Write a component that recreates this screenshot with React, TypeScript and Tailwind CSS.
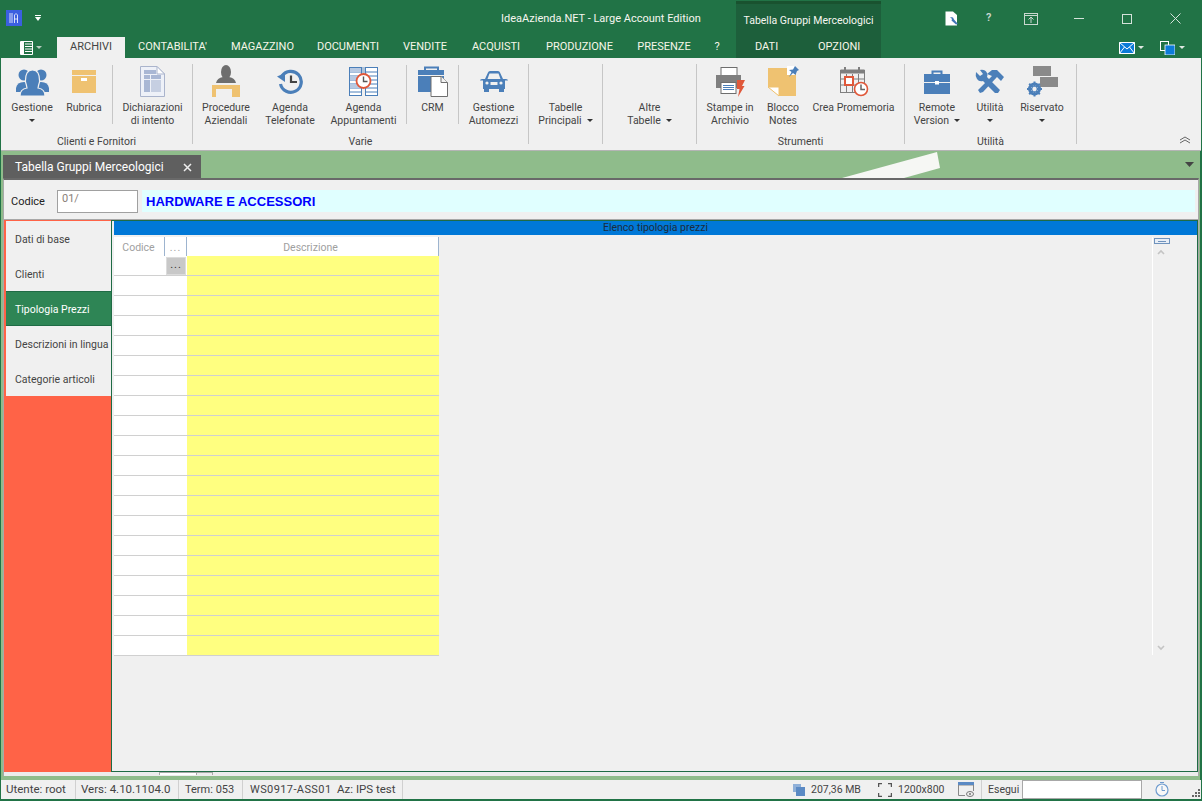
import React from "react";

const BLUE = "#4b7fb9";
const TAN = "#efc271";
const GRAY = "#7f7f7f";
const RED = "#e0583a";

function Arrow({ color = "#333" }: { color?: string }) {
  return (
    <svg width="6" height="3" viewBox="0 0 6 3" className="inline-block shrink-0">
      <path d="M0 0H6L3 3Z" fill={color} />
    </svg>
  );
}

const PeopleIcon = () => (
  <svg width="33" height="28" viewBox="0 0 33 28">
    <circle cx="8" cy="7" r="5.5" fill={BLUE} />
    <circle cx="25" cy="7" r="5.5" fill={BLUE} />
    <path d="M0 20Q1 14 8 14T16 20L16 24H0Z" fill={BLUE} />
    <path d="M33 20Q32 14 25 14T17 20L17 24H33Z" fill={BLUE} />
    <path d="M4 28Q4 21 11 20Q10.500 17 9.500 14Q9 2 16.500 2Q24 2 23.500 14Q22.500 17 22 20Q29 21 29 28Z" fill={BLUE} stroke="#f0f0f0" strokeWidth="1.2" />
  </svg>
);

const BoxIcon = () => (
  <svg width="24" height="23" viewBox="0 0 24 23">
    <rect x="0" y="0" width="24" height="5" fill={TAN} />
    <rect x="0" y="6" width="24" height="17" fill={TAN} />
    <rect x="9" y="8" width="6" height="3" fill="#fff" />
  </svg>
);

const DocIcon = () => (
  <svg width="25" height="31" viewBox="0 0 25 31">
    <path d="M0.500 0.500H17L24.500 8V30.500H0.500Z" fill="#eef1f8" stroke="#aab4cc" />
    <path d="M17 0.500V8H24.500Z" fill="#fff" stroke="#aab4cc" />
    <rect x="4" y="4" width="12" height="4" fill="#a9b7d4" />
    <rect x="4" y="9" width="6" height="4" fill="#a9b7d4" />
    <rect x="11" y="9" width="10" height="4" fill="#a9b7d4" />
    <rect x="4" y="14" width="6" height="12" fill="#a9b7d4" />
    <rect x="11" y="14" width="10" height="12" fill="#c6cfe2" />
  </svg>
);

const DeskIcon = () => (
  <svg width="28" height="33" viewBox="0 0 28 33">
    <ellipse cx="14" cy="7" rx="5" ry="7" fill="#6e6e6e" />
    <path d="M4 18Q5 13 11 12H17Q23 13 24 18Z" fill="#6e6e6e" />
    <path d="M0 20H28V32H20V24H4V32H0Z" fill={TAN} />
  </svg>
);

const HistoryIcon = () => (
  <svg width="26" height="25" viewBox="0 0 26 25">
    <path d="M5 7A10.500 10.500 0 1 1 3.500 15" fill="none" stroke={BLUE} strokeWidth="3.200" />
    <path d="M0 7.500L8 4L8 13Z" fill={BLUE} />
    <path d="M14 6.500V13H20" fill="none" stroke="#444" strokeWidth="2.200" />
  </svg>
);

const ScheduleIcon = () => (
  <svg width="29" height="30" viewBox="0 0 29 30">
    <rect x="0.500" y="0.500" width="12" height="28" fill="#fff" stroke={BLUE} />
    <rect x="16.500" y="0.500" width="12" height="28" fill="#fff" stroke={BLUE} />
    <path d="M1 5H12M1 9H12M1 13H12M1 17H12M1 21H12M1 25H12M17 5H28M17 9H28M17 13H28M17 17H28M17 21H28M17 25H28" stroke={BLUE} />
    <rect x="1" y="1" width="11" height="4" fill="#b7c9e2" />
    <rect x="1" y="9" width="11" height="4" fill="#b7c9e2" />
    <rect x="1" y="17" width="11" height="4" fill="#b7c9e2" />
    <rect x="12" y="0" width="5" height="6" fill="#4b7fb9" opacity="0.400" />
    <circle cx="14.500" cy="14" r="7" fill="#fff" stroke={RED} strokeWidth="1.800" />
    <path d="M14.500 9.500V14.500H18.500" fill="none" stroke="#555" strokeWidth="1.400" />
  </svg>
);

const CrmIcon = () => (
  <svg width="30" height="31" viewBox="0 0 30 31">
    <path d="M7 4V1.500H20V5" fill="none" stroke={BLUE} strokeWidth="2" />
    <rect x="0" y="4" width="26" height="5" fill={BLUE} />
    <rect x="0" y="10" width="26" height="16" fill={BLUE} />
    <path d="M13 10.500H23L29.500 16.500V30.500H13Z" fill="#fff" stroke="#6f6f6f" />
    <path d="M23 10.500V16.500H29.500" fill="#f2f2f2" stroke="#6f6f6f" />
  </svg>
);

const CarIcon = () => (
  <svg width="28" height="21" viewBox="0 0 28 21">
    <path d="M5 8L8 1.500Q8.500 0 10 0H18Q19.500 0 20 1.500L23 8H26Q28 8 28 9.500H25V18H3V9.500H0Q0 8 2 8Z" fill={BLUE} />
    <path d="M7.500 8L9.500 2.500H18.500L20.500 8Z" fill="#f0f0f0" />
    <rect x="4" y="17" width="5" height="4" fill={BLUE} />
    <rect x="19" y="17" width="5" height="4" fill={BLUE} />
    <circle cx="7" cy="12" r="1.600" fill="#f0f0f0" />
    <circle cx="21" cy="12" r="1.600" fill="#f0f0f0" />
    <rect x="10.500" y="11" width="7" height="3" fill="#f0f0f0" />
  </svg>
);

const PrinterIcon = () => (
  <svg width="29" height="30" viewBox="0 0 29 30">
    <rect x="5" y="0.500" width="16" height="9" fill="#fff" stroke="#6e6e6e" />
    <rect x="0" y="8" width="25" height="13" fill="#7f7f7f" />
    <rect x="5" y="15.500" width="15" height="11" fill="#fff" stroke="#6e6e6e" />
    <path d="M7 18.500H18M7 20.500H18M7 22.500H18" stroke={BLUE} />
    <path d="M21 13H29L26 19H28.500L22 30L23.500 22H21Z" fill={RED} />
  </svg>
);

const NoteIcon = () => (
  <svg width="31" height="31" viewBox="0 0 31 31">
    <path d="M0 2H28V30H11L0 21Z" fill={TAN} />
    <path d="M0 21H11V30Z" fill="#fff" stroke={TAN} />
    <rect x="19" y="0" width="8" height="9" fill="#fff" />
    <path d="M27 0L31 4L29 5L27.500 9L25 7L21 11L23.500 6L21 4L25 3.500Z" fill={BLUE} />
  </svg>
);

const CalendarIcon = () => (
  <svg width="30" height="31" viewBox="0 0 30 31">
    <rect x="1.500" y="4.500" width="24" height="22" fill="#f0f0f0" stroke={GRAY} />
    <rect x="1.500" y="3.500" width="24" height="4" fill={GRAY} />
    <rect x="5" y="1" width="2" height="5" fill={GRAY} />
    <rect x="19" y="1" width="2" height="5" fill={GRAY} />
    <path d="M7.500 8V26M13.500 8V26M19.500 8V26M2 13H25M2 19H25" stroke={GRAY} />
    <rect x="6" y="11" width="8" height="8" fill="#fff" stroke={RED} strokeWidth="2" />
    <circle cx="22" cy="23" r="6.500" fill="#fff" stroke={RED} strokeWidth="1.600" />
    <path d="M22 18.500V23.500H26" fill="none" stroke="#666" strokeWidth="1.500" />
  </svg>
);

const CaseIcon = () => (
  <svg width="26" height="24" viewBox="0 0 26 24">
    <path d="M8.500 5V1.500H17.500V5" fill="none" stroke={BLUE} strokeWidth="2" />
    <rect x="0" y="4" width="26" height="8" fill={BLUE} />
    <rect x="0" y="13" width="26" height="11" fill={BLUE} />
    <rect x="11" y="11" width="4" height="3.500" fill="#fff" />
  </svg>
);

const ToolsIcon = () => (
  <svg width="30" height="25" viewBox="0 0 30 25">
    <path d="M1 3L5 7L8 5L5 1Q10 0 12 4Q13 6 12 8L25 21L23 24L20 24L8 12Q4 13 2 10Q0 7 1 3Z" fill={BLUE} />
    <path d="M12 5L17 1H22L29 8L26 12L22 8L8 23L5 24L3 21L17 7Z" fill={BLUE} />
  </svg>
);

const ReservedIcon = () => (
  <svg width="33" height="31" viewBox="0 0 33 31">
    <rect x="7" y="0" width="18" height="10" fill="#8a8a8a" />
    <rect x="14" y="11" width="18" height="10" fill="#8a8a8a" />
    <circle cx="8.500" cy="23" r="5" fill="none" stroke={BLUE} strokeWidth="3" />
    <path d="M8.500 15.500V30.500M1 23H16M3.200 17.700L13.800 28.300M13.800 17.700L3.200 28.300" stroke={BLUE} strokeWidth="2" />
    <circle cx="8.500" cy="23" r="2.200" fill="#f0f0f0" />
  </svg>
);

type ItemProps = {
  w: string;
  icon?: React.ReactNode;
  lines: string[];
  arrow?: "below" | "inline";
};

function Item({ w, icon, lines, arrow }: ItemProps) {
  return (
    <div className={`flex flex-col items-center pt-[5px] ${w}`}>
      <div className="flex h-[37px] w-full items-center justify-center">{icon}</div>
      <div className="mt-px flex flex-col items-center whitespace-nowrap text-[10.5px] leading-[13px] text-[#444]">
        {lines.map((l, i) => (
          <div key={i} className="flex items-center gap-[5px]">
            {l}
            {arrow === "inline" && i === lines.length - 1 && <Arrow />}
          </div>
        ))}
        {arrow === "below" && (
          <div className="flex h-[13px] items-center">
            <Arrow />
          </div>
        )}
      </div>
    </div>
  );
}

const ShortSep = () => <div className="mt-[7px] h-[59px] w-px shrink-0 bg-[#c6c6c6]" />;
const GroupSep = () => <div className="mt-[6px] h-[80px] w-px shrink-0 bg-[#c6c6c6]" />;

function Group({ label, w, children }: { label?: string; w: string; children: React.ReactNode }) {
  return (
    <div className={`relative flex h-[92px] shrink-0 flex-col ${w}`}>
      <div className="flex h-[76px]">{children}</div>
      <div className="h-[16px] pt-px text-center text-[10.5px] leading-[14px] text-[#444]">{label}</div>
    </div>
  );
}

function Tab({ label, w, active }: { label: string; w: string; active?: boolean }) {
  return (
    <div
      className={`flex h-[21px] shrink-0 items-center justify-center whitespace-nowrap text-[11px] ${w} ${
        active ? "bg-[#f0f0f0] text-[#444]" : "text-[#f6f6e8]"
      }`}
    >
      {label}
    </div>
  );
}

const rows = Array.from({ length: 20 }, (_, i) => i);

export default function App() {
  return (
    <div
      className="flex h-[801px] w-[1202px] flex-col overflow-hidden bg-[#217346]"
      style={{ fontFamily: 'Roboto, "Noto Sans", sans-serif' }}
    >
      {/* Title bar */}
      <div className="flex h-[58px] shrink-0">
        <div className="flex w-[736px] shrink-0 flex-col">
          <div className="flex h-[37px] items-center">
            <div className="ml-[6px] mt-[-1px] flex h-[16px] w-[16px] items-center justify-center bg-[#3b5fe0]">
              <svg width="10" height="12" viewBox="0 0 10 12">
                <path d="M1 1V11M3 1V11M5.500 11V3Q7 0 8.500 3V11M5.500 7H8.500" fill="none" stroke="#fff" strokeWidth="0.800" />
              </svg>
            </div>
            <svg width="6" height="6" viewBox="0 0 6 6" className="ml-[13px] mt-[-1px]">
              <path d="M0 0H6V1H0ZM0 2H6L3 6Z" fill="#fff" />
            </svg>
            <div className="ml-[460px] mt-[1px] whitespace-nowrap text-[11px] text-[#f6f6f0]">
              IdeaAzienda.NET - Large Account Edition
            </div>
          </div>
          <div className="flex h-[21px] items-center">
            <div className="ml-[20px] flex w-[37px] shrink-0 items-center gap-[3px]">
              <svg width="13" height="14" viewBox="0 0 13 14">
                <path d="M0.500 0.500H12.500V13.500H0.500Z" fill="#217346" stroke="#fff" />
                <rect x="1" y="1" width="3" height="12" fill="#fff" />
                <path d="M5 3H12M5 5.500H12M5 8H12M5 10.500H12" stroke="#fff" />
              </svg>
              <Arrow color="#b8ccbf" />
            </div>
            <Tab label="ARCHIVI" w="w-[68px]" active />
            <Tab label="CONTABILITA'" w="w-[95px]" />
            <Tab label="MAGAZZINO" w="w-[85px]" />
            <Tab label="DOCUMENTI" w="w-[86px]" />
            <Tab label="VENDITE" w="w-[68px]" />
            <Tab label="ACQUISTI" w="w-[74px]" />
            <Tab label="PRODUZIONE" w="w-[93px]" />
            <Tab label="PRESENZE" w="w-[76px]" />
            <Tab label="?" w="w-[30px]" />
          </div>
        </div>
        <div className="mt-[1px] flex w-[145px] shrink-0 flex-col border-t-[3px] border-[#19522f] bg-[#1d5f3b]">
          <div className="flex h-[33px] items-center justify-center whitespace-nowrap text-[10.5px] text-[#f6f6f0]">
            Tabella Gruppi Merceologici
          </div>
          <div className="flex h-[21px] items-center text-[11px] text-[#f6f6e8]">
            <div className="w-[82px] pl-[19px]">DATI</div>
            <div>OPZIONI</div>
          </div>
        </div>
        <div className="relative flex-1">
          <div className="flex h-[37px] items-center">
            <svg width="14" height="15" viewBox="0 0 14 15" className="ml-[64px] mt-[-1px]">
              <path d="M0.500 0.500H8L12 4V14.500H0.500Z" fill="#fff" />
              <path d="M5 6L7 8L6.500 9.500L11 13.500L13 13L9 8.500L8 6.500Z" fill="#3f74b5" />
            </svg>
            <div className="ml-[27px] mt-[-1px] w-[10px] text-[11px] font-semibold text-[#c9d8cf]">?</div>
            <svg width="14" height="12" viewBox="0 0 14 12" className="ml-[28px]">
              <rect x="0.500" y="0.500" width="13" height="11" fill="none" stroke="#c9d8cf" />
              <path d="M1 2.500H13M7 10V4.500M4.500 6.500L7 4L9.500 6.500" fill="none" stroke="#c9d8cf" />
            </svg>
            <div className="ml-[36px] h-px w-[10px] bg-[#d5e2da]" />
            <div className="ml-[38px] h-[10px] w-[10px] border border-[#d5e2da]" />
            <svg width="11" height="11" viewBox="0 0 11 11" className="ml-[38px]">
              <path d="M0.500 0.500L10.500 10.500M10.500 0.500L0.500 10.500" stroke="#d5e2da" />
            </svg>
          </div>
          <div className="flex h-[21px] items-center">
            <svg width="16" height="12" viewBox="0 0 16 12" className="ml-[238px]">
              <rect width="16" height="12" fill="#0c7bd8" />
              <path d="M0.500 0.500H15.500V11.500H0.500ZM0.500 0.500L8 7L15.500 0.500M0.500 11.500L5.500 5M15.500 11.500L10.500 5" fill="none" stroke="#fff" />
            </svg>
            <div className="ml-[3px] flex">
              <Arrow color="#dfe8e2" />
            </div>
            <svg width="15" height="14" viewBox="0 0 15 14" className="ml-[16px]">
              <rect x="0.500" y="0.500" width="8" height="9" fill="none" stroke="#fff" />
              <rect x="5" y="4" width="10" height="10" fill="#0c7bd8" stroke="#fff" strokeWidth="0.800" />
            </svg>
            <div className="ml-[4px] flex">
              <Arrow color="#dfe8e2" />
            </div>
          </div>
        </div>
      </div>

      {/* Ribbon */}
      <div className="mx-px flex h-[93px] shrink-0 border-b border-[#b4b4b4] bg-[#f0f0f0]">
        <Group label="Clienti e Fornitori" w="w-[191px]">
          <div className="w-[3px]" />
          <Item w="w-[56px]" icon={<PeopleIcon />} lines={["Gestione"]} arrow="below" />
          <Item w="w-[48px]" icon={<BoxIcon />} lines={["Rubrica"]} />
          <div className="w-[4px]" />
          <ShortSep />
          <Item w="w-[79px]" icon={<DocIcon />} lines={["Dichiarazioni", "di intento"]} />
        </Group>
        <GroupSep />
        <Group label="Varie" w="w-[335px]">
          <Item w="w-[66px]" icon={<DeskIcon />} lines={["Procedure", "Aziendali"]} />
          <Item w="w-[62px]" icon={<HistoryIcon />} lines={["Agenda", "Telefonate"]} />
          <Item w="w-[85px]" icon={<ScheduleIcon />} lines={["Agenda", "Appuntamenti"]} />
          <ShortSep />
          <Item w="w-[51px]" icon={<CrmIcon />} lines={["CRM"]} />
          <ShortSep />
          <Item w="w-[69px]" icon={<CarIcon />} lines={["Gestione", "Automezzi"]} />
        </Group>
        <GroupSep />
        <Group w="w-[73px]">
          <Item w="w-[73px]" lines={["Tabelle", "Principali"]} arrow="inline" />
        </Group>
        <GroupSep />
        <Group w="w-[93px]">
          <Item w="w-[93px]" lines={["Altre", "Tabelle"]} arrow="inline" />
        </Group>
        <GroupSep />
        <Group label="Strumenti" w="w-[207px]">
          <Item w="w-[66px]" icon={<PrinterIcon />} lines={["Stampe in", "Archivio"]} />
          <Item w="w-[40px]" icon={<NoteIcon />} lines={["Blocco", "Notes"]} />
          <Item w="w-[101px]" icon={<CalendarIcon />} lines={["Crea Promemoria"]} />
        </Group>
        <GroupSep />
        <Group label="Utilità" w="w-[171px]">
          <Item w="w-[64px]" icon={<CaseIcon />} lines={["Remote", "Version"]} arrow="inline" />
          <Item w="w-[42px]" icon={<ToolsIcon />} lines={["Utilità"]} arrow="below" />
          <Item w="w-[62px]" icon={<ReservedIcon />} lines={["Riservato"]} arrow="below" />
        </Group>
        <GroupSep />
        <div className="flex flex-1 items-end justify-end pb-[6px] pr-[10px]">
          <svg width="12" height="8" viewBox="0 0 12 8">
            <path d="M1 4L6 1L11 4M1 7L6 4L11 7" fill="none" stroke="#666" />
          </svg>
        </div>
      </div>

      {/* Workspace */}
      <div className="ml-px mr-[2px] flex flex-1 flex-col bg-[#8fbc8b] pl-[2px] pr-px">
        <div className="relative h-[27px] shrink-0 pt-[4px]">
          <div className="flex h-[23px] w-[198px] items-center justify-between bg-[#5f5f5f] pl-[12px] pr-[9px] pt-[1px] text-[12px] text-white">
            <span className="whitespace-nowrap">Tabella Gruppi Merceologici</span>
            <svg width="9" height="9" viewBox="0 0 9 9">
              <path d="M1 1L8 8M8 1L1 8" stroke="#eee" strokeWidth="1.500" />
            </svg>
          </div>
          <svg width="100" height="27" viewBox="0 0 100 27" className="absolute left-[839px] top-0">
            <path d="M0 27L95 1L98 17L62 27Z" fill="#f6f7f4" />
          </svg>
          <svg width="9" height="5" viewBox="0 0 9 5" className="absolute right-[5px] top-[11px]">
            <path d="M0 0H9L4.500 5Z" fill="#444" />
          </svg>
        </div>

        <div className="flex h-[598px] shrink-0 flex-col border-x border-t-2 border-x-[#a8a8a8] border-t-[#696969] bg-[#f0f0f0]">
          {/* Form header */}
          <div className="flex h-[40px] shrink-0 items-start border-b border-[#a8a8a8] pt-[10px]">
            <div className="ml-[7px] mt-[4px] w-[46px] text-[11px] leading-[16px] text-[#222]">Codice</div>
            <div className="h-[23px] w-[81px] border border-[#a0a0a0] bg-white pl-[4px] text-[11px] leading-[16px] text-[#8a7f78]">
              01/
            </div>
            <div
              className="ml-[4px] mr-[3px] h-[22px] flex-1 bg-[#e0ffff] pl-[4px] pt-px text-[13px] font-bold leading-[22px] text-[#0000ff]"
              style={{ fontFamily: '"Liberation Sans", Arial, sans-serif' }}
            >
              HARDWARE E ACCESSORI
            </div>
          </div>

          {/* Body */}
          <div className="flex h-[552px] shrink-0">
            <div className="flex w-[108px] shrink-0 flex-col border-r border-[#1f6b45] bg-[#ff6347] pl-[2px] pt-px">
              <div className="bg-[#f0f0f0] text-[10.5px] text-[#444]">
                <div className="flex h-[35px] items-center pl-[9px] pt-[3px]">Dati di base</div>
                <div className="flex h-[35px] items-center pl-[9px] pt-[3px]">Clienti</div>
                <div className="flex h-[35px] items-center border-y border-[#1f6b45] bg-[#2e8555] pl-[9px] pt-[3px] text-white">
                  Tipologia Prezzi
                </div>
                <div className="flex h-[35px] items-center whitespace-nowrap pl-[9px] pt-[3px]">Descrizioni in lingua</div>
                <div className="flex h-[35px] items-center pl-[9px] pt-[3px]">Categorie articoli</div>
              </div>
            </div>
            <div className="flex min-w-0 flex-1 flex-col border-y border-r border-[#1f6b45] bg-[#f0f0f0] pl-[2px]">
              <div className="flex h-[14px] shrink-0 items-center justify-center bg-[#0078d7] text-[10.5px] text-[#1c2c3c]">
                Elenco tipologia prezzi
              </div>
              <div className="mt-[2px] flex">
                <div className="w-[325px] shrink-0">
                  <div className="flex h-[19px] bg-white text-[10.5px] leading-[21px] text-[#a0a0a0]">
                    <div className="w-[51px] border-r border-[#9db4cf] pr-px text-center">Codice</div>
                    <div className="w-[22px] border-r border-[#9db4cf] text-center tracking-[1px]">...</div>
                    <div className="flex-1 border-r border-[#9db4cf] pr-[4px] text-center">Descrizione</div>
                  </div>
                  {rows.map((r) => (
                    <div key={r} className="flex h-[20px] border-b border-[#d0d0d0] bg-white">
                      <div className="w-[73px] pl-[52px]">
                        {r === 0 && (
                          <div className="mt-px flex h-[18px] w-[20px] items-center justify-center border border-[#dcdcdc] bg-[#c8c8c8] pb-[2px] text-[11px] tracking-[1px] text-[#333]">
                            ...
                          </div>
                        )}
                      </div>
                      <div className="flex-1 bg-[#ffff80]" />
                    </div>
                  ))}
                </div>
                <div className="flex-1" />
                <div className="flex h-[418px] w-[45px] shrink-0 flex-col items-start border-l border-white">
                  <div className="ml-px mt-px flex h-[6px] w-[16px] items-center justify-center border border-[#6f93bd] bg-[#e8eef6]">
                    <div className="h-px w-[8px] bg-[#6f93bd]" />
                  </div>
                  <svg width="8" height="6" viewBox="0 0 8 6" className="ml-[4px] mt-[5px]">
                    <path d="M1 5L4 2L7 5" fill="none" stroke="#c4c4c4" strokeWidth="1.600" />
                  </svg>
                  <div className="flex-1" />
                  <svg width="8" height="6" viewBox="0 0 8 6" className="mb-[4px] ml-[4px]">
                    <path d="M1 1L4 4L7 1" fill="none" stroke="#c4c4c4" strokeWidth="1.600" />
                  </svg>
                </div>
              </div>
            </div>
          </div>

          {/* Remnant of the horizontal scroll bar */}
          <div className="flex h-[4px] shrink-0 bg-[#ececec]">
            <div className="ml-[155px] h-[3px] w-[38px] border-x border-t border-[#a8a8a8] bg-white" />
            <div className="h-[3px] w-[16px] border-r border-t border-[#a8a8a8]" />
          </div>
        </div>
      </div>

      {/* Status bar */}
      <div className="mx-px mb-[2px] flex h-[19px] shrink-0 items-center bg-[#f0f0f0] text-[11px] text-[#444]">
        <div className="w-[74px] whitespace-nowrap pl-[5px] text-[11.5px]">Utente: root</div>
        <div className="h-[19px] w-px bg-[#d0d0d0]" />
        <div className="w-[102px] whitespace-nowrap pl-[5px] text-[11.5px]">Vers: 4.10.1104.0</div>
        <div className="h-[19px] w-px bg-[#d0d0d0]" />
        <div className="mt-px w-[63px] whitespace-nowrap pl-[6px]">Term: 053</div>
        <div className="h-[19px] w-px bg-[#d0d0d0]" />
        <div className="mt-px w-[94px] whitespace-nowrap pl-[7px] tracking-[0.4px]">WS0917-ASS01</div>
        <div className="w-[65px] whitespace-nowrap text-[11.5px]">Az: IPS test</div>
        <div className="h-[19px] w-px bg-[#d0d0d0]" />
        <div className="flex-1" />
        <svg width="12" height="12" viewBox="0 0 12 12">
          <rect x="0" y="0" width="8" height="8" fill="#8fb0d8" />
          <rect x="3" y="3" width="9" height="9" fill="#5b8ac4" />
        </svg>
        <div className="ml-[6px] w-[67px] whitespace-nowrap text-[10.5px]">207,36 MB</div>
        <svg width="14" height="14" viewBox="0 0 14 14">
          <path d="M0.500 4V0.500H4M10 0.500H13.500V4M0.500 10V13.500H4M10 13.500H13.500V10" fill="none" stroke="#555" strokeWidth="1.500" />
        </svg>
        <div className="ml-[6px] w-[60px] whitespace-nowrap text-[10.5px]">1200x800</div>
        <svg width="16" height="15" viewBox="0 0 16 15">
          <path d="M0.500 3H15.500V9M0.500 3V13.500H7" fill="none" stroke="#888" />
          <rect x="0" y="0" width="16" height="3" fill="#5b8ac4" />
          <ellipse cx="12" cy="12" rx="3.500" ry="2.500" fill="none" stroke="#777" />
          <circle cx="12" cy="12" r="1" fill="#777" />
        </svg>
        <div className="ml-[7px] h-[19px] w-px bg-[#d0d0d0]" />
        <div className="ml-[6px] w-[34px] whitespace-nowrap text-[10.5px]">Esegui</div>
        <div className="h-[19px] w-[120px] border border-[#a8a8a8] bg-white" />
        <svg width="14" height="17" viewBox="0 0 14 17" className="ml-[13px]">
          <circle cx="7" cy="9" r="6" fill="#f8f8f8" stroke="#6f9ccf" strokeWidth="1.200" />
          <path d="M7 5V9.500H10M5 1.500H9" fill="none" stroke="#6f9ccf" />
        </svg>
        <svg width="9" height="9" viewBox="0 0 9 9" className="ml-[23px] mt-[8px]">
          <path d="M6 0H8V2H6ZM3 3H5V5H3ZM6 3H8V5H6ZM0 6H2V8H0ZM3 6H5V8H3ZM6 6H8V8H6Z" fill="#666" />
        </svg>
      </div>
    </div>
  );
}
